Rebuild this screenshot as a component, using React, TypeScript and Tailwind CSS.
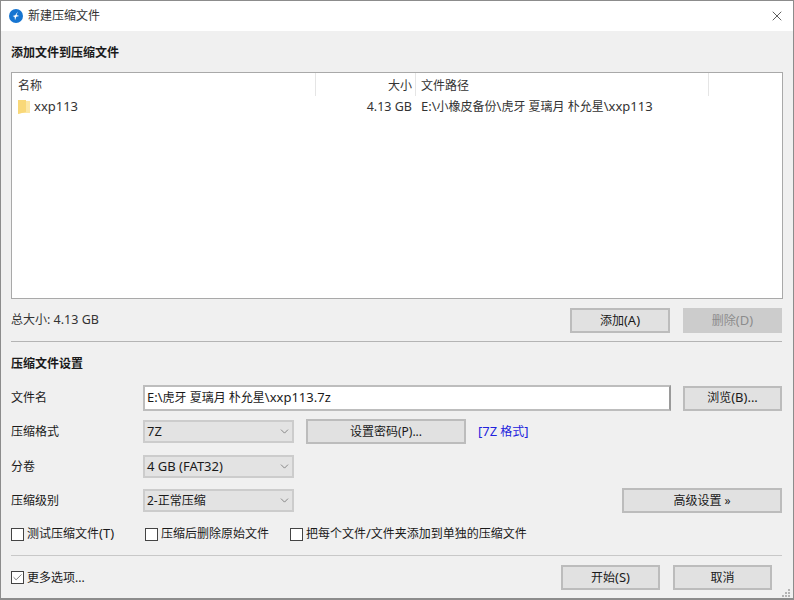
import { ChevronDown, Check, X } from 'lucide-react';
import type { ReactNode } from 'react';

const font = 'font-["Noto_Sans","Noto_Sans_CJK_SC",sans-serif]';

// latin text runs a bit wider than the cjk around it
const L = ({ children }: { children: ReactNode }) => <span className="text-[13px]">{children}</span>;

const Btn = ({ children, className = '', disabled = false }: { children: ReactNode; className?: string; disabled?: boolean }) => (
    <div
        className={`flex items-center justify-center border-2 text-xs ${
            disabled ? 'border-[#cccccc] bg-[#cccccc] text-[#8c8c8c]' : 'border-[#bcbcbc] bg-[#e1e1e1] text-[#1a1a1a]'
        } ${className}`}
    >
        <span>{children}</span>
    </div>
);

const Select = ({ children }: { children: ReactNode }) => (
    <div className="flex h-[23px] w-[151px] items-center justify-between border-2 border-[#cccccc] bg-[#e3e3e3] pl-[2px] pr-[1px] text-xs text-[#1a1a1a]">
        <span>{children}</span>
        <ChevronDown size={13} strokeWidth={1.2} className="text-[#555555]" />
    </div>
);

const Box = ({ children, checked = false, className = '' }: { children: ReactNode; checked?: boolean; className?: string }) => (
    <div className={`flex items-center gap-[3px] text-xs text-[#1a1a1a] ${className}`}>
        <div className="flex h-[13px] w-[13px] items-center justify-center border border-[#444444] bg-white">
            {checked && <Check size={11} strokeWidth={1.3} className="text-[#222222]" />}
        </div>
        <span>{children}</span>
    </div>
);

const Row = ({ label, children, className = '' }: { label: string; children: ReactNode; className?: string }) => (
    <div className={`flex w-[771px] items-center ${className}`}>
        <div className="w-[132px] text-xs text-[#1a1a1a]">{label}</div>
        {children}
    </div>
);

const App = () => {
    return (
        <div className={`relative flex h-[600px] w-[794px] flex-col overflow-hidden border border-b-2 border-[#8c8c8c] bg-[#f0f0f0] ${font}`}>
            <div className="flex h-[30px] items-center justify-between bg-white pl-[8px] pr-[8px]">
                <div className="flex items-center gap-[5px] text-xs text-[#333333]">
                    <svg width="14" height="14" viewBox="0 0 14 14">
                        <circle cx="7" cy="7" r="7" fill="#1675d1" />
                        <path d="M8.8 2.6 7.6 6l2.6 1-2.9.8L6 11.2 5.6 8 3.6 7l2.6-.8Z" fill="#ffffff" />
                    </svg>
                    <span>新建压缩文件</span>
                </div>
                <X size={16} strokeWidth={1.1} className="text-[#222222]" />
            </div>

            <div className="flex flex-1 flex-col px-[10px]">
                <div className="mt-[14px] text-xs font-bold leading-[16px] text-[#1a1a1a]">添加文件到压缩文件</div>

                <div className="mt-[11px] h-[227px] w-[772px] border border-[#a9a9a9] bg-white text-xs text-[#333333]">
                    <div className="flex h-[23px] items-center">
                        <div className="h-full w-[304px] border-r border-[#e5e5e5] pl-[6px] leading-[25px]">名称</div>
                        <div className="h-full w-[100px] border-r border-[#e5e5e5] pr-[3px] text-right leading-[25px]">大小</div>
                        <div className="h-full w-[293px] border-r border-[#e5e5e5] pl-[5px] leading-[25px]">文件路径</div>
                    </div>
                    <div className="flex h-[22px] items-center">
                        <div className="flex w-[304px] items-center gap-[4px] pl-[6px] text-[13px]">
                            <svg width="12" height="14" viewBox="0 0 12 14">
                                <path d="M0 0h5l1 1h6v12H3l-3 1Z" fill="#fce7a6" />
                                <path d="M0 0h8v12L0 14Z" fill="#f9d879" />
                            </svg>
                            <span>xxp113</span>
                        </div>
                        <div className="w-[100px] pr-[4px] text-right"><span className="text-[12.5px]">4.13 GB</span></div>
                        <div className="pl-[5px]"><L>E:\</L>小橡皮备份<L>\</L>虎牙 夏璃月 朴允星<L>\xxp113</L></div>
                    </div>
                </div>

                <div className="mt-[9px] flex w-[771px] items-center justify-between">
                    <div className="text-xs text-[#333333]">总大小<span className="text-[12.5px]">: 4.13 GB</span></div>
                    <div className="flex gap-[13px]">
                        <Btn className="h-[25px] w-[100px]">添加<L>(A)</L></Btn>
                        <Btn className="h-[25px] w-[99px]" disabled>删除<L>(D)</L></Btn>
                    </div>
                </div>

                <div className="mt-[8px] h-px w-[771px] bg-[#b4b4b4]" />

                <div className="mt-[14px] text-xs font-bold leading-[16px] text-[#1a1a1a]">压缩文件设置</div>

                <Row label="文件名" className="mt-[13px]">
                    <div className="flex h-[26px] w-[528px] items-center border-2 border-[#bdbdbd] border-r-[#9a9a9a] bg-white pl-[2px] text-xs text-[#1a1a1a]">
                        <span><L>E:\</L>虎牙 夏璃月 朴允星<L>\xxp113.7z</L></span>
                    </div>
                    <Btn className="ml-[12px] h-[25px] w-[99px]">浏览<L>(B)...</L></Btn>
                </Row>

                <Row label="压缩格式" className="mt-[8px]">
                    <Select><L>7Z</L></Select>
                    <Btn className="ml-[12px] h-[25px] w-[160px]">设置密码(P)...</Btn>
                    <span className="ml-[12px] text-xs text-[#2222dd]"><L>[7Z</L> 格式<L>]</L></span>
                </Row>

                <Row label="分卷" className="mt-[11px]">
                    <Select><L>4 GB (FAT32)</L></Select>
                </Row>

                <Row label="压缩级别" className="mt-[10px]">
                    <Select>2-正常压缩</Select>
                    <Btn className="ml-auto h-[25px] w-[160px]">高级设置 »</Btn>
                </Row>

                <div className="mt-[13px] flex h-[16px] items-center">
                    <Box className="w-[134px]">测试压缩文件<L>(T)</L></Box>
                    <Box className="w-[145px]">压缩后删除原始文件</Box>
                    <Box>把每个文件<L>/</L>文件夹添加到单独的压缩文件</Box>
                </div>

                <div className="mt-[13px] h-px w-[771px] bg-[#c8c8c8]" />

                <div className="mt-[9px] flex w-[771px] items-center justify-between pr-[10px]">
                    <Box checked>更多选项...</Box>
                    <div className="flex gap-[13px]">
                        <Btn className="h-[25px] w-[99px]">开始<L>(S)</L></Btn>
                        <Btn className="h-[25px] w-[99px]">取消</Btn>
                    </div>
                </div>
            </div>

            {/* resize grip */}
            <svg className="absolute bottom-0 right-[1px]" width="10" height="9" viewBox="0 0 10 9" fill="#b4b4b4">
                <rect x="6" y="0" width="2" height="2" />
                <rect x="3" y="3" width="2" height="2" />
                <rect x="6" y="3" width="2" height="2" />
                <rect x="0" y="6" width="2" height="2" />
                <rect x="3" y="6" width="2" height="2" />
                <rect x="6" y="6" width="2" height="2" />
            </svg>
        </div>
    );
};

export default App;
